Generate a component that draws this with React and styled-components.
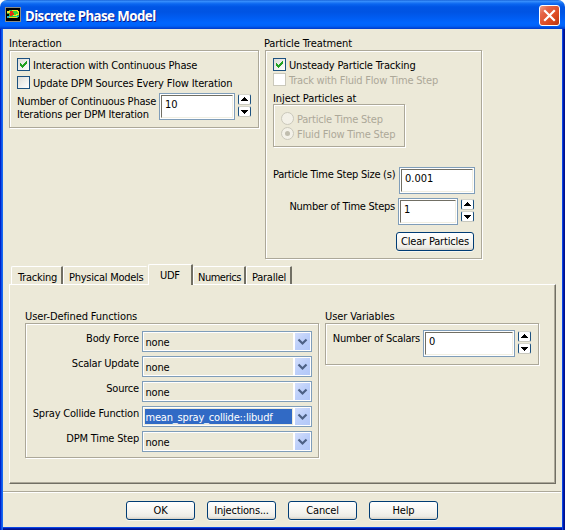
import React, { Fragment } from 'react';
import styled, { createGlobalStyle, css } from 'styled-components';

const GlobalStyle = createGlobalStyle`
  * {
    box-sizing: border-box;
  }
  body {
    margin: 0;
    background: #fff;
    color: #000;
    font: 11px/13px "DejaVu Sans Condensed", "DejaVu Sans", sans-serif;
    letter-spacing: -0.19px;
    white-space: nowrap;
  }
`

const Dialog = styled.div`
  display: flex;
  flex-direction: column;
  width: 565px;
  height: 530px;
  overflow: hidden;
  background: #ece9d8;
  border-radius: 7px 7px 0 0;
`

const TitleBar = styled.header`
  display: flex;
  flex: none;
  height: 29px;
  padding: 6px 6px 0 5px;
  background: linear-gradient(
    #0a52cc 0, #3d95ff 1px, #2b83f8 2px, #0a66f0 4px, #0055e5 7px,
    #0054e3 12px, #005bf0 17px, #0066ff 23px, #0062f8 26px, #0046d8 28px, #003cc8 29px
  );
`

const Title = styled.h1`
  flex: 1;
  margin: 0 0 0 3px;
  padding-top: 1px;
  color: #fff;
  font: bold 13.3px/18px "Noto Sans", "Open Sans", sans-serif;
  letter-spacing: -0.58px;
  text-shadow: 1px 1px 0 #0f1c8c;
`

const CloseButton = styled.button`
  width: 21px;
  height: 21px;
  margin: -1px -1px 0 0;
  padding: 0;
  border: 1px solid #fff;
  border-radius: 3px;
  background: linear-gradient(135deg, #f0a08a 0, #e5664a 25%, #dd4a20 65%, #b83510 100%);

  svg {
    display: block;
  }
`

const Client = styled.main`
  flex: 1;
  border: solid;
  border-width: 0 3px 3px;
  border-color: transparent;
  background:
    linear-gradient(#ece9d8, #ece9d8) padding-box,
    linear-gradient(90deg, #0022c8 0 1px, #0b50e8 1px 2px, #1668f0 2px 3px, transparent 3px 562px, #0a48e4 562px 563px, #0018a8 563px 564px, #00128c 564px) border-box,
    linear-gradient(0deg, #00128c 0 1px, #0018a8 1px 2px, #0a48e4 2px 3px, transparent 3px) border-box;
`

const Upper = styled.div`
  display: flex;
  align-items: flex-start;
  gap: 6px;
  padding: 8px 0 0 6px;
`

const GroupLabel = styled.div`
  height: 13px;
  margin-left: ${props => props.$shift || 0}px;
  letter-spacing: -0.1px;
`

const GroupBox = styled.div`
  width: ${props => props.$w}px;
  height: ${props => props.$h}px;
  padding: ${props => props.$pad || '7px 0 0 7px'};
  border: 1px solid #aca899;
  box-shadow: 1px 1px 0 #fff, inset 1px 1px 0 #fff;
`

const Option = styled.label`
  display: flex;
  gap: 3px;
  height: 13px;
  margin-bottom: ${props => props.$gap || 0}px;
  color: ${props => props.$disabled ? '#aca899' : '#000'};
  letter-spacing: ${props => props.$disabled ? '-0.21px' : '-0.16px'};

  span {
    padding-top: 1px;
  }
`

const Box = styled.i`
  width: 13px;
  height: 13px;
  border: 1px solid ${props => props.$disabled ? '#cac8bb' : '#1c5180'};
  background: ${props => props.$disabled ? '#fff' : 'linear-gradient(135deg, #dcdcd7, #fff)'};

  svg {
    display: block;
  }
`

const Dot = styled.i`
  display: flex;
  align-items: center;
  justify-content: center;
  width: 13px;
  height: 13px;
  border: 1px solid #cac8bb;
  border-radius: 50%;
  background: #f3f1e8;

  &::after {
    content: '';
    width: 5px;
    height: 5px;
    border-radius: 50%;
    background: ${props => props.$on ? '#c0bdae' : 'transparent'};
  }
`

const InjectBlock = styled.div`
  margin: 6px 0 20px;

  ${GroupBox} {
    margin-top: -1px;
  }
`

const Row = styled.div`
  display: flex;
  width: ${props => props.$w ? props.$w + 'px' : 'auto'};
  margin-bottom: ${props => props.$gap || 0}px;
`

const RowLabel = styled.div`
  flex: ${props => props.$w ? `0 0 ${props.$w}px` : 1};
  min-width: 0;
  padding: ${props => props.$top || 0}px ${props => props.$right || 0}px 0 0;
  letter-spacing: ${props => props.$tight ? '-0.25px' : 'inherit'};
  text-align: ${props => props.$align || 'right'};
`

const Field = styled.div`
  flex: none;
  width: ${props => props.$w}px;
  height: 27px;
  padding: 1px;
  border: 1px solid #7f9db9;
  background: #fff;

  div {
    height: 100%;
    padding: 2px 0 0 3px;
    border: 1px solid;
    border-color: #716f64 #f1efe2 #f1efe2 #716f64;
    letter-spacing: 0;
  }
`

const Arrows = styled.div`
  display: flex;
  flex-direction: column;
  gap: 1px;
  margin: 1px 0 0 3px;
`

const ArrowButton = styled.button`
  width: 13px;
  height: 11px;
  padding: 0;
  border: 1px solid #1c5180;
  border-top-color: #d5d5cb;
  border-bottom-color: #c8c8bd;
  border-radius: 2px;
  background: #fff;

  svg {
    display: block;
  }
`

const PushButton = styled.button`
  width: ${props => props.$w || 69}px;
  height: 19px;
  padding: 0;
  border: 1px solid #003c74;
  border-radius: 3px;
  background: linear-gradient(#fff, #f4f3ee 60%, #ecebe5 85%, #d6d0c5);
  box-shadow: 0 1px 0 #f8f7f0;
  color: #000;
  font: inherit;
  letter-spacing: inherit;
  line-height: 17px;
`

const ClearRow = styled.div`
  display: flex;
  justify-content: flex-end;
  width: 201px;
  margin-top: 7px;
`

const Tabs = styled.nav`
  display: flex;
  align-items: flex-end;
  height: 20px;
  margin: 5px 0 0 6px;
  padding-left: 2px;
  letter-spacing: -0.25px;
`

const Tab = styled.div`
  width: ${props => props.$w}px;
  height: 18px;
  padding: 4px 0 0 ${props => props.$pad || 5}px;
  border: solid;
  border-width: 1px 2px 0 1px;
  border-color: #fff #716f64 #fff #fff;
  border-radius: 2px 1px 0 0;
  letter-spacing: ${props => props.$tight ? '-0.5px' : 'inherit'};

  ${props => props.$covered && css`
    border-right-color: #ece9d8;
  `}

  ${props => props.$active && css`
    z-index: 1;
    height: 21px;
    margin-bottom: -1px;
    background: #ece9d8;
  `}
`

const Pane = styled.section`
  display: flex;
  gap: 6px;
  width: 547px;
  height: 200px;
  margin-left: 6px;
  padding: 25px 0 0 15px;
  border: solid;
  border-width: 1px;
  border-color: #fff #716f64 #716f64 #fff;
  box-shadow: inset -1px -1px 0 #aca899;
`

const Combo = styled.div`
  display: flex;
  width: 170px;
  height: 21px;
  border: 1px solid #7f9db9;
  box-shadow: inset 0 0 0 1px #fff;
`

const ComboValue = styled.span`
  flex: 1;
  height: 15px;
  margin: 2px 1px 0 2px;
  padding: 2px 0 0 0.5px;
  background: ${props => props.$selected ? '#316ac5' : 'transparent'};
  color: ${props => props.$selected ? '#fff' : '#000'};
`

const ComboButton = styled.span`
  width: 18px;
  height: 19px;
  border: 1px solid #fff;
  border-left-width: 2px;
  background: linear-gradient(135deg, #d3defb, #bccffa 50%, #b3c8f8);

  svg {
    display: block;
  }
`

const Separator = styled.hr`
  width: 558px;
  height: 2px;
  margin: 7px 0 8px;
  border: 0;
  background: linear-gradient(#aca899 50%, #fff 50%);
`

const Footer = styled.footer`
  display: flex;
  gap: 12px;
  padding-left: 123px;
`

const AppIcon = () => (
  <svg width="17" height="16" viewBox="0 -1 17 16" shapeRendering="crispEdges">
    <path d="M0 0h16v15H0z" fill="#8c8c84" />
    <path d="M1 1h14v13H1z" fill="#000" />
    <path d="M2 4h2V3h9v1h1v6h-1v1H3v-1h1V7H2z" fill="#28c848" />
    <path d="M2 4h4v3H4V6H2z" fill="#f0e830" />
    <path d="M7 3h6v1h1v4h-2v1H8V7H7z" fill="#f4e420" />
    <path d="M8 4h4v1h1v2h-2v1H9V6H8z" fill="#38d830" />
    <path d="M5 4h3v2h1v2H7v1H5V7H4V6h1z" fill="#e83010" />
    <path d="M2 9h3v1H4v1H2zM11 9h3v1h-3z" fill="#20b8d0" />
    <path d="M4 10h8v1H4z" fill="#e8d820" />
  </svg>
)

const Check = () => (
  <svg width="11" height="11" viewBox="0 0 11 11" shapeRendering="crispEdges">
    <path d="M2 4h1v1h1v1h1V5h1V4h1V3h1V2h1v3H8v1H7v1H6v1H5v1H4V8H3V7H2z" fill="#21a121" />
  </svg>
)

const Checkbox = ({ checked, disabled, gap, children }) => (
  <Option $disabled={disabled} $gap={gap}>
    <Box $disabled={disabled}>{checked && <Check />}</Box>
    <span>{children}</span>
  </Option>
)

const Radio = ({ on, gap, children }) => (
  <Option $disabled $gap={gap}>
    <Dot $on={on} />
    <span>{children}</span>
  </Option>
)

const Spinner = () => (
  <Arrows>
    <ArrowButton>
      <svg width="11" height="9" viewBox="0 0 11 9" shapeRendering="crispEdges">
        <path d="M5 2h1v1h1v1h1v1h1v1H2V5h1V4h1V3h1z" />
      </svg>
    </ArrowButton>
    <ArrowButton>
      <svg width="11" height="9" viewBox="0 0 11 9" shapeRendering="crispEdges">
        <path d="M2 3h7v1H8v1H7v1H6v1H5V6H4V5H3V4H2z" />
      </svg>
    </ArrowButton>
  </Arrows>
)

const functions = [
  ['Body Force', 'none'],
  ['Scalar Update', 'none'],
  ['Source', 'none'],
  ['Spray Collide Function', 'mean_spray_collide::libudf'],
  ['DPM Time Step', 'none'],
]

const App = () => {
  return (
    <Fragment>
      <GlobalStyle />
      <Dialog>
        <TitleBar>
          <AppIcon />
          <Title>Discrete Phase Model</Title>
          <CloseButton>
            <svg width="19" height="19" viewBox="0 0 19 19">
              <path d="M5 5l9 9M14 5l-9 9" stroke="#fff" strokeWidth="2.2" strokeLinecap="square" />
            </svg>
          </CloseButton>
        </TitleBar>
        <Client>
          <Upper>
            <div>
              <GroupLabel>Interaction</GroupLabel>
              <GroupBox $w={250} $h={78}>
                <Checkbox checked gap={5}>Interaction with Continuous Phase</Checkbox>
                <Checkbox gap={4}>Update DPM Sources Every Flow Iteration</Checkbox>
                <Row>
                  <RowLabel $w={142} $top={2} $align="left">
                    Number of Continuous Phase<br />Iterations per DPM Iteration
                  </RowLabel>
                  <Field $w={76}><div>10</div></Field>
                  <Spinner />
                </Row>
              </GroupBox>
            </div>
            <div>
              <GroupLabel $shift={-1}>Particle Treatment</GroupLabel>
              <GroupBox $w={217} $h={209}>
                <Checkbox checked gap={2}>Unsteady Particle Tracking</Checkbox>
                <Checkbox disabled>Track with Fluid Flow Time Step</Checkbox>
                <InjectBlock>
                  <GroupLabel>Inject Particles at</GroupLabel>
                  <GroupBox $w={132} $h={43}>
                    <Radio gap={2}>Particle Time Step</Radio>
                    <Radio on>Fluid Flow Time Step</Radio>
                  </GroupBox>
                </InjectBlock>
                <Row $w={202} $gap={4}>
                  <RowLabel $top={1} $right={4} $tight>Particle Time Step Size (s)</RowLabel>
                  <Field $w={76}><div>0.001</div></Field>
                </Row>
                <Row $w={201}>
                  <RowLabel $top={2} $right={3} $tight>Number of Time Steps</RowLabel>
                  <Field $w={60}><div>1</div></Field>
                  <Spinner />
                </Row>
                <ClearRow>
                  <PushButton $w={78}>Clear Particles</PushButton>
                </ClearRow>
              </GroupBox>
            </div>
          </Upper>
          <Tabs>
            <Tab $w={52} $pad={6}>Tracking</Tab>
            <Tab $w={85} $covered>Physical Models</Tab>
            <Tab $w={45} $pad={11} $active>UDF</Tab>
            <Tab $w={53} $pad={4} $tight>Numerics</Tab>
            <Tab $w={46}>Parallel</Tab>
          </Tabs>
          <Pane>
            <div>
              <GroupLabel>User-Defined Functions</GroupLabel>
              <GroupBox $w={294} $h={135} $pad="7px 0 0">
                {functions.map(([name, value]) => (
                  <Row key={name} $gap={4}>
                    <RowLabel $w={116} $top={1} $right={3}>{name}</RowLabel>
                    <Combo>
                      <ComboValue $selected={value !== 'none'}>{value}</ComboValue>
                      <ComboButton>
                        <svg width="15" height="17" viewBox="0 0 15 17">
                          <path d="M3.5 6.5l4 4 4-4" fill="none" stroke="#4d6185" strokeWidth="2.2" />
                        </svg>
                      </ComboButton>
                    </Combo>
                  </Row>
                ))}
              </GroupBox>
            </div>
            <div>
              <GroupLabel>User Variables</GroupLabel>
              <GroupBox $w={214} $h={42} $pad="6px 0 0 6px">
                <Row>
                  <RowLabel $w={91} $top={2} $right={3} $tight>Number of Scalars</RowLabel>
                  <Field $w={92}><div>0</div></Field>
                  <Spinner />
                </Row>
              </GroupBox>
            </div>
          </Pane>
          <Separator />
          <Footer>
            <PushButton>OK</PushButton>
            <PushButton>Injections...</PushButton>
            <PushButton>Cancel</PushButton>
            <PushButton>Help</PushButton>
          </Footer>
        </Client>
      </Dialog>
    </Fragment>
  );
}
export default App;
